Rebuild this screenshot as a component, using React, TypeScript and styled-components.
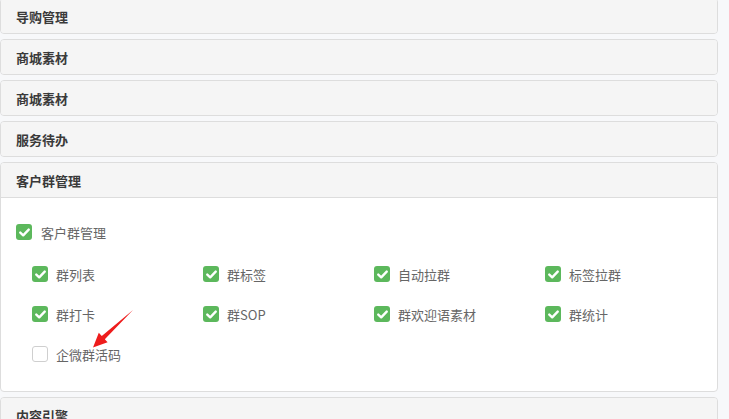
import React from "react";
import styled, { createGlobalStyle } from "styled-components";

const Global = createGlobalStyle`
  html, body { margin: 0; padding: 0; background: #f7f8fa; }
  body { font-family: "Noto Sans CJK SC", "Noto Sans", sans-serif; font-size: 13px; color: #333; overflow: hidden; }
`;

const Page = styled.div`
  position: relative;
  width: 718px;
  margin-top: -2px;
  display: flex;
  flex-direction: column;
  gap: 5px;
`;

const Panel = styled.section`
  border: 1px solid #dddddd;
  border-radius: 4px;
  background: #fff;
  overflow: hidden;
`;

const PanelHeader = styled.div`
  height: 34px;
  display: flex;
  align-items: center;
  padding: 0 15px;
  background: #f5f5f5;
  font-size: 13px;
  font-weight: 600;
  color: #3a3a3a;
`;

const PanelBody = styled.div`
  border-top: 1px solid #dddddd;
  padding: 16px 15px 17px;
`;

const TopRow = styled.div`
  height: 36px;
  display: flex;
  align-items: center;
`;

const Grid = styled.div`
  margin: 4px 0 0 16px;
  display: grid;
  grid-template-columns: repeat(4, 171px);
  grid-auto-rows: 40px;
`;

const Item = styled.label<{ $gap: number }>`
  display: flex;
  align-items: center;
  gap: ${(p) => p.$gap}px;
  color: #666;
  font-size: 13px;
`;

const Box = styled.span<{ $checked: boolean }>`
  width: 16px;
  height: 16px;
  box-sizing: border-box;
  border-radius: 3px;
  display: inline-flex;
  align-items: center;
  justify-content: center;
  background: ${(p) => (p.$checked ? "#5cb85c" : "#fff")};
  border: ${(p) => (p.$checked ? "none" : "1px solid #cfcfcf")};
`;

const Arrow = styled.svg`
  position: absolute;
  left: 0;
  top: 2px;
  pointer-events: none;
`;

const Check = ({ checked }: { checked: boolean }) => (
  <Box $checked={checked}>
    {checked && (
      <svg width="11" height="9" viewBox="0 0 11 9">
        <path d="M1.3 4.6 L4.2 7.3 L9.7 1.6" fill="none" stroke="#fff" strokeWidth="2.4" strokeLinecap="round" strokeLinejoin="round" />
      </svg>
    )}
  </Box>
);

const subItems: [string, boolean][] = [
  ["群列表", true],
  ["群标签", true],
  ["自动拉群", true],
  ["标签拉群", true],
  ["群打卡", true],
  ["群SOP", true],
  ["群欢迎语素材", true],
  ["群统计", true],
  ["企微群活码", false],
];

export default function App() {
  return (
    <>
      <Global />
      <Page>
        <Panel><PanelHeader>导购管理</PanelHeader></Panel>
        <Panel><PanelHeader>商城素材</PanelHeader></Panel>
        <Panel><PanelHeader>商城素材</PanelHeader></Panel>
        <Panel><PanelHeader>服务待办</PanelHeader></Panel>
        <Panel>
          <PanelHeader>客户群管理</PanelHeader>
          <PanelBody>
            <TopRow>
              <Item $gap={9}><Check checked />客户群管理</Item>
            </TopRow>
            <Grid>
              {subItems.map(([t, c]) => (
                <Item key={t} $gap={8}><Check checked={c} />{t}</Item>
              ))}
            </Grid>
          </PanelBody>
        </Panel>
        <Panel><PanelHeader>内容引擎</PanelHeader></Panel>
        <Arrow width="729" height="419" viewBox="0 0 729 419">
          <polygon points="133,310 104.8,339.2 107.6,342.2 93,347.5 98.8,332.8 101.8,336" fill="#ee1c1c" />
        </Arrow>
      </Page>
    </>
  );
}
